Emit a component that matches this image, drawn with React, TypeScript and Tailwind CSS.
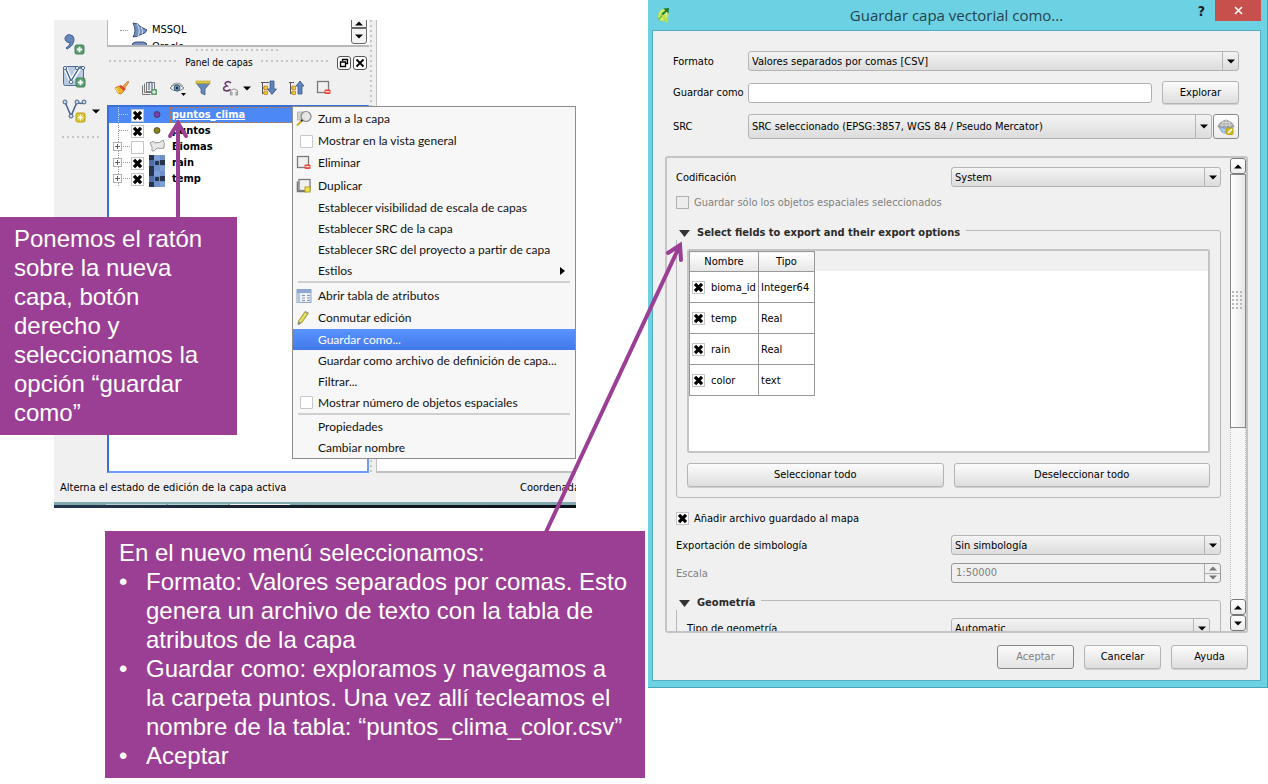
import React from 'react';
import type { ReactNode } from 'react';

const btn =
  'rounded-[3px] border border-[#b4b4b4] bg-linear-to-b from-[#fcfcfc] to-[#dedede] pt-px text-black shadow-[0_1px_0_#d0d0d0]';

function Caret({ up = false, className = 'fill-black' }: { up?: boolean; className?: string }) {
  return (
    <svg width="8" height="5" viewBox="0 0 8 5" className={className} aria-hidden="true">
      <path d={up ? 'M0 4.5 4 .5l4 4z' : 'M0 .5h8l-4 4z'} />
    </svg>
  );
}

function Combo({ id, value, height = 'h-5', className = '' }: { id: string; value: string; height?: string; className?: string }) {
  return (
    <div className={`relative min-w-0 ${height} ${className}`}>
      <select
        id={id}
        className="block h-full w-full appearance-none rounded-[3px] border border-[#b4b4b4] bg-linear-to-b from-[#f4f4f4] to-[#dcdcdc] pt-0.5 pr-4 pl-[3px] text-black"
      >
        <option>{value}</option>
      </select>
      <span className="pointer-events-none absolute inset-y-px right-px flex w-4 items-center justify-center border-l border-[#b4b4b4]">
        <Caret />
      </span>
    </div>
  );
}

function Tick({ id, checked = false, disabled = false, label }: { id: string; checked?: boolean; disabled?: boolean; label?: string }) {
  return (
    <span className="relative block size-[13px] shrink-0">
      <input
        id={id}
        type="checkbox"
        defaultChecked={checked}
        disabled={disabled}
        aria-label={label}
        className="peer block size-[13px] appearance-none border border-[#c4c4c4] bg-white disabled:border-[#b0b0b0] disabled:bg-[#ececec]"
      />
      <svg viewBox="0 0 13 13" className="pointer-events-none absolute inset-0 hidden peer-checked:block" aria-hidden="true">
        <path d="M3 2.800l7 7.400M10 2.800l-7 7.400" stroke="#000" strokeWidth="3.200" />
      </svg>
    </span>
  );
}

function Dots({ className = '' }: { className?: string }) {
  return (
    <span
      className={`block h-[5px] bg-[radial-gradient(circle_at_1px_1px,#c6c6c6_1px,transparent_1px)] bg-size-[5px_5px] ${className}`}
    />
  );
}

/* ---------- toolbar drawings ---------- */

function PlusBadge({ x, y }: { x: number; y: number }) {
  return (
    <g>
      <rect x={x} y={y} width="9" height="9" rx="1.5" fill="#5a9e6f" stroke="#3f8257" />
      <path d={`M${x + 4.5} ${y + 1.8}v5.4M${x + 1.8} ${y + 4.5}h5.4`} stroke="#fff" strokeWidth="1.8" />
    </g>
  );
}

const CommaIcon = () => (
  <svg width="26" height="24" viewBox="0 0 26 24">
    <path d="M3 6a4.600 4.600 0 0 1 9 1c0 5-3 8-7 10l-1-1c3-2 4-4 4-5.500-3 .5-5-1.500-5-4.500z" fill="#6687b8" stroke="#3e5f92" />
    <PlusBadge x={13} y={13} />
  </svg>
);

const VectorIcon = () => (
  <svg width="26" height="26" viewBox="0 0 26 26">
    <rect x="1.500" y="2.500" width="20" height="19" rx="2" fill="#b9cbe2" stroke="#4e6c94" />
    <path d="M3 3l6 14L18 3" fill="none" stroke="#fff" strokeWidth="4" />
    <path d="M3 3l6 14L17 4h4" fill="none" stroke="#46638c" strokeWidth="1.400" />
    <g fill="#fff" stroke="#46638c">
      <circle cx="3" cy="4" r="1.600" />
      <circle cx="9" cy="18" r="1.800" />
      <circle cx="15" cy="4" r="1.600" />
      <circle cx="21" cy="4" r="1.600" />
    </g>
    <PlusBadge x={14} y={14} />
  </svg>
);

const NewShapeIcon = () => (
  <svg width="26" height="26" viewBox="0 0 26 26">
    <path d="M3 4l6 14 6-14q4 3 8 0" fill="none" stroke="#46638c" strokeWidth="1.500" />
    <g fill="#c9d6e8" stroke="#46638c">
      <circle cx="3" cy="4" r="2" />
      <circle cx="9" cy="18" r="2" />
      <circle cx="15" cy="4" r="2" />
      <circle cx="22" cy="4" r="2" />
    </g>
    <rect x="14" y="15" width="9" height="9" rx="1.500" fill="#dcc62e" stroke="#b59f10" />
    <path d="M18.500 16.500v6M15.500 19.500h6M16.500 17.500l4 4M20.500 17.500l-4 4" stroke="#fff" strokeWidth=".9" />
  </svg>
);

const BrushIcon = () => (
  <svg width="16" height="16" viewBox="0 0 16 16">
    <path d="M1 8l4-2 5 5-3 3-3-1z" fill="#e9b52e" stroke="#d97a28" />
    <path d="M1 8l3 5 1 0-2-5z" fill="#f7df62" />
    <path d="M5 6l2-1 5 4-2 2z" fill="#d8492f" />
    <path d="M9 6l5-5 1 1-4 6z" fill="#e9a046" stroke="#b9762a" strokeWidth=".6" />
  </svg>
);

const GroupIcon = () => (
  <svg width="17" height="17" viewBox="0 0 17 17">
    <path d="M1.500 5.500v9h8M3.500 3.500v9h8" fill="none" stroke="#777" />
    <rect x="5.500" y="2.500" width="8" height="9" fill="#f2f2f2" stroke="#777" />
    <path d="M8 10V3.500a1.500 1.500 0 0 1 3 0V9" fill="none" stroke="#4f6e98" strokeWidth="1.200" />
    <rect x="10" y="9" width="6" height="6" rx="1" fill="#5a9e6f" />
    <path d="M13 10v4M11 12h4" stroke="#fff" />
  </svg>
);

const EyeIcon = () => (
  <svg width="19" height="17" viewBox="0 0 19 17">
    <path d="M1 8q6-7 14 0-7 6-14 0z" fill="#fff" stroke="#777" />
    <path d="M2 6q6-6 12 0" fill="none" stroke="#999" />
    <circle cx="8" cy="8" r="3" fill="#7893bd" stroke="#415f8d" />
    <circle cx="8" cy="8" r="1.200" fill="#16263f" />
    <path d="M12 13h5l-2.500 3z" />
  </svg>
);

const FunnelIcon = () => (
  <svg width="16" height="16" viewBox="0 0 16 16">
    <path d="M1 3h14L10 9v6l-4-2V9z" fill="#6687b8" stroke="#46638c" strokeWidth=".8" />
    <rect x="1" y="1" width="14" height="2.500" fill="#e0c840" stroke="#b59f2a" strokeWidth=".6" />
  </svg>
);

const EpsilonIcon = () => (
  <svg width="17" height="17" viewBox="0 0 17 17">
    <path d="M9 3Q7 1 4.500 2 1.500 3.500 5 6 .5 7 2 10q3 2 6.500-.5" fill="none" stroke="#6e3d70" strokeWidth="1.600" />
    <path d="M8.500 15v-4q3.500-4 7 0v4M8.500 12.500h1.500V15H8.500M15.500 12.500H14V15h1.500" fill="none" stroke="#999" strokeWidth="1.100" />
  </svg>
);

function ExpandIcon({ up = false }: { up?: boolean }) {
  return (
    <svg width="17" height="16" viewBox="0 0 17 16">
      <path d={up ? 'M1 2.500h5M2.500 2v12M3 8h3M3 13h3' : 'M1 2.500h8M2.500 2v12M3 8h3M3 13h3'} fill="none" stroke="#555" />
      <path d="M4 6h3.500v3.500H4zM4 11h3.500v3.500H4z" fill="#e8c93a" stroke="#c17a2a" strokeWidth=".7" />
      {up ? (
        <path d="M12 1l4 5h-2v8h-4V6H8z" fill="#5f83bb" stroke="#36568a" strokeWidth=".8" />
      ) : (
        <path d="M10 1h4v8h2.500L12 14.500 7.500 9H10z" fill="#5f83bb" stroke="#36568a" strokeWidth=".8" />
      )}
    </svg>
  );
}

const RemoveIcon = () => (
  <svg width="16" height="16" viewBox="0 0 16 16">
    <rect x="1.500" y="1.500" width="11" height="11" fill="#f0f0ee" stroke="#7a7a7a" strokeWidth="1.300" />
    <rect x="8.500" y="9.500" width="6" height="4.500" rx="1" fill="#e8463c" />
    <path d="M9.500 11.700h4" stroke="#fff" />
  </svg>
);

const DuplicateIcon = () => (
  <svg width="16" height="16" viewBox="0 0 16 16">
    <path d="M1.500 3.500v10h9" fill="none" stroke="#777" strokeWidth="1.600" />
    <rect x="3" y="1.500" width="11" height="11" fill="#f0f0ee" stroke="#7a7a7a" strokeWidth="1.300" />
    <rect x="9" y="9" width="5" height="5" fill="#f3e35a" stroke="#b59f10" />
  </svg>
);

const ZoomIcon = () => (
  <svg width="17" height="17" viewBox="0 0 17 17">
    <path d="M1.500 2h7v8h-7z" fill="#d4d4d2" stroke="#b5b5b3" />
    <circle cx="10" cy="6.500" r="5" fill="#e4e4e2" fillOpacity=".9" stroke="#8a8a8a" strokeWidth="1.200" />
    <path d="M6.500 10L5 11.500" stroke="#333" strokeWidth="1.800" />
    <path d="M5 11.500L1 15.500" stroke="#cdb21f" strokeWidth="2" />
  </svg>
);

const TableIcon = () => (
  <svg width="16" height="16" viewBox="0 0 16 16">
    <rect x="1" y="1.500" width="14" height="13" fill="#e8edf5" stroke="#8da3c4" />
    <rect x="1" y="1.500" width="14" height="3.500" fill="#8faad2" />
    <rect x="1" y="5" width="3.500" height="9.500" fill="#b5c7e2" />
    <path d="M6 7.500h3M6 10h3M6 12.500h3M11 7.500h3M11 10h3M11 12.500h3" stroke="#8595ae" />
    <path d="M5 5v9M10 5v9" stroke="#fff" />
  </svg>
);

const PencilIcon = () => (
  <svg width="16" height="16" viewBox="0 0 16 16">
    <path d="M9 1.500l3.500 1.700L5.500 13 2 14.800 2.500 11z" fill="#d8cc3a" stroke="#8a8435" strokeWidth=".7" />
    <path d="M10.500 2.500L4 12" stroke="#f7f2a0" />
    <path d="M2.500 11.500l2.700 1.500L2 15z" fill="#888" />
    <path d="M9.300 1.200l3.400 1.600-.8 1-3.400-1.600z" fill="#999" />
  </svg>
);

const DbIcon = () => (
  <svg width="18" height="17" viewBox="0 0 18 17">
    <path d="M2 1q5 0 8 4l6 3q-2 4-5 4-5 3-9 3 4-6 0-14z" fill="#7590bd" stroke="#36507c" />
    <path d="M6 2q4 6 1 12M10 5q3 4 1 7" fill="none" stroke="#d6e0ef" />
  </svg>
);

const GlobeIcon = () => (
  <svg width="18" height="18" viewBox="0 0 18 18">
    <path d="M2 9a7 7 0 0 0 10 6l4-6z" fill="#8eaedb" />
    <path d="M5 10q2 1 2 5M3 12h8" fill="none" stroke="#c5d6ef" strokeWidth=".8" />
    <path d="M1 9q1-5 8-7 7 2 8 7z" fill="#a9a9a9" stroke="#888" strokeWidth=".7" />
    <path d="M3 7h12M5 4.500h8M9 2v7M6 3.500L5 9M12 3.500L13 9" stroke="#e6e6e6" strokeWidth=".7" />
    <rect x="9.500" y="10" width="6.500" height="6.500" rx="1" fill="#d6bd22" stroke="#b59f10" />
    <path d="M11 15l4-4" stroke="#fff" strokeWidth="1.600" />
  </svg>
);

const LogoIcon = () => (
  <svg width="15" height="18" viewBox="0 0 15 18">
    <path d="M2.500 10.500Q2.500 4 8 3q4 .5 4 5 0 6-5 7-4.500-.5-4.500-4.500z" fill="#d8f07a" stroke="#b4dc4a" />
    <path d="M5 11.500q0-4.500 4-6" fill="none" stroke="#8cc63c" strokeWidth="1.800" />
    <path d="M8 9q0 5 4 6.500" fill="none" stroke="#b8e04e" strokeWidth="3" />
    <path d="M2.500 13.500L6 10" fill="none" stroke="#7ab83a" strokeWidth="1.500" />
    <path d="M6.500 8.500L11 4" stroke="#23803a" strokeWidth="2" />
    <path d="M7.500 2.500L13 2l-.5 5.500z" fill="#1f7a36" />
  </svg>
);

/* ---------- layer tree ---------- */

function Branch({ box, first }: { box?: boolean; first?: boolean }) {
  return (
    <svg width="22" height="16" viewBox="0 0 22 16" className="shrink-0" aria-hidden="true">
      <path d={`M9.500 0v16M${box ? 14 : 10} 7.500h9`} fill="none" stroke={first ? '#c9d6f2' : '#999'} strokeDasharray="1 1" />
      {box && (
        <>
          <rect x="4.500" y="3.500" width="8" height="8" fill="#fff" stroke="#b0b0b0" />
          <path d="M6 7.500h5M8.500 5v5" stroke="#666" />
        </>
      )}
    </svg>
  );
}

const RasterGlyph = () => (
  <svg width="16" height="16" viewBox="0 0 16 16">
    <rect width="16" height="16" fill="#6f90cb" />
    <path d="M0 0h5v5H0zM6 6h4v4H6zM11 5h5v5h-5zM0 11h5v5H0z" fill="#27344f" />
    <path d="M5 0h6v5H5zM11 11h5v5h-5z" fill="#7f9fd6" />
    <path d="M0 5h5v6H0z" fill="#4f6ea8" />
  </svg>
);

const Dot = ({ color }: { color: string }) => (
  <svg width="16" height="16" viewBox="0 0 16 16">
    <circle cx="8" cy="7.500" r="3" fill={color} stroke="#333" strokeWidth=".7" />
  </svg>
);

const PolyGlyph = () => (
  <svg width="16" height="16" viewBox="0 0 16 16">
    <path d="M1 4q3-3 6 0 4 0 7-3 2 3 1 8-4 1-7 0-3 4-5 3 1-4-2-8z" fill="#e8e8e6" stroke="#999" />
  </svg>
);

type Layer = { name: string; checked: boolean; glyph: ReactNode; box?: boolean; selected?: boolean };
const layers: Layer[] = [
  { name: 'puntos_clima', checked: true, glyph: <Dot color="#7a3fb4" />, selected: true },
  { name: 'puntos', checked: true, glyph: <Dot color="#8a8410" /> },
  { name: 'Biomas', checked: false, glyph: <PolyGlyph />, box: true },
  { name: 'rain', checked: true, glyph: <RasterGlyph />, box: true },
  { name: 'temp', checked: true, glyph: <RasterGlyph />, box: true },
];

function MainWindow() {
  return (
    <div className="flex w-[522px] flex-col overflow-hidden bg-[#f0f0f0] text-[11px] [font-family:'DejaVu_Sans_Condensed','DejaVu_Sans',sans-serif]">
      <div className="flex h-[453px]">
        <div className="flex w-[53px] shrink-0 flex-col items-start gap-2 pt-3 pl-2">
          <button aria-label="Texto delimitado"><CommaIcon /></button>
          <button aria-label="Capa virtual"><VectorIcon /></button>
          <div className="flex items-center gap-1">
            <button aria-label="Nueva capa"><NewShapeIcon /></button>
            <button aria-label="Más capas"><Caret /></button>
          </div>
          <Dots className="mt-1 w-[40px]" />
        </div>

        <div className="flex w-[262px] shrink-0 flex-col">
          <div className="flex h-[27px] shrink-0 overflow-hidden border-b-2 border-l border-[#b8b8b8] bg-white">
            <ul className="flex-1 pl-3">
              <li className="flex h-5 items-center gap-[3px]">
                <span className="w-2 border-t border-dotted border-[#999]" />
                <DbIcon /> MSSQL
              </li>
              <li className="flex h-3.5 items-center gap-[3px]">
                <span className="w-2 border-t border-dotted border-[#999]" />
                <svg width="18" height="12" viewBox="0 0 18 12" aria-hidden="true">
                  <rect x="1" y="1" width="15" height="10" rx="4" fill="#7590bd" stroke="#36507c" />
                </svg>
                Oracle
              </li>
            </ul>
            <div className="mr-0.5 w-4">
              <button aria-label="Subir" className="flex h-2 w-full items-center justify-center border border-t-0 border-[#666] bg-[#f4f4f4]"><Caret up /></button>
              <button aria-label="Bajar" className="flex h-4 w-full items-center justify-center rounded-b-[3px] border border-[#666] bg-[#f4f4f4]"><Caret /></button>
            </div>
          </div>
          <Dots className="mx-auto mt-0.5 w-[85px]" />
          <div className="flex h-[17px] items-center gap-2 pr-0.5 pl-0.5">
            <Dots className="flex-1" />
            <h2 className="text-[10px]">Panel de capas</h2>
            <Dots className="flex-1" />
            <div className="flex gap-0.5">
              <button aria-label="Desacoplar" className="flex size-3.5 items-center justify-center rounded-[3px] border border-[#555] bg-white">
                <svg width="10" height="10" viewBox="0 0 10 10"><path d="M3.500 3V1.500h5v4H7M1.500 4h5v4.500h-5z" fill="none" stroke="#000" strokeWidth="1.300" /></svg>
              </button>
              <button aria-label="Cerrar panel" className="flex size-3.5 items-center justify-center rounded-[3px] border border-[#555] bg-white">
                <svg width="10" height="10" viewBox="0 0 10 10"><path d="M1.500 1.500l7 7M8.500 1.500l-7 7" stroke="#000" strokeWidth="1.800" /></svg>
              </button>
            </div>
          </div>
          <div className="flex h-[34px] items-center gap-[11px] pl-[7px]">
            <button aria-label="Estilo"><BrushIcon /></button>
            <button aria-label="Añadir grupo"><GroupIcon /></button>
            <button aria-label="Visibilidad"><EyeIcon /></button>
            <button aria-label="Filtrar leyenda" className="-ml-1"><FunnelIcon /></button>
            <div className="flex items-center gap-1">
              <button aria-label="Filtrar por expresión"><EpsilonIcon /></button>
              <button aria-label="Opciones de filtro"><Caret /></button>
            </div>
            <button aria-label="Expandir todo" className="-ml-0.5"><ExpandIcon /></button>
            <button aria-label="Contraer todo"><ExpandIcon up /></button>
            <button aria-label="Eliminar capa"><RemoveIcon /></button>
          </div>
          <ul className="flex-1 border-2 border-[#6f9cf5] border-l-[#3b6fd8] border-t-[#3b6fd8] bg-white font-bold">
            {layers.map((l) => (
              <li key={l.name} className={l.selected ? 'flex h-4 items-center bg-[#4d88f7] text-white' : 'flex h-4 items-center text-black'}>
                <Branch box={l.box} first={l.selected} />
                <Tick id={`layer-${l.name}`} checked={l.checked} label={l.name} />
                <span className="mx-[5px]">{l.glyph}</span>
                {l.selected ? (
                  <span className="flex h-4 flex-1 items-center border border-dashed border-[#c4763a] pt-px pl-px underline">{l.name}</span>
                ) : (
                  <span className="pt-px pl-0.5">{l.name}</span>
                )}
              </li>
            ))}
          </ul>
        </div>

        <div className="w-[7px] shrink-0 bg-[radial-gradient(circle_at_2px_1px,#c8c8c8_1px,transparent_1px)] bg-size-[7px_5px]" />
        <div className="flex-1 border-b-2 border-l border-[#c0c0c0] bg-white" />
      </div>
      <footer className="flex h-[29px] items-center justify-between pt-0.5 pl-1.5">
        <p>Alterna el estado de edición de la capa activa</p>
        <p className="w-14 overflow-hidden whitespace-nowrap">Coordenada</p>
      </footer>
      <div className="flex h-[3px] gap-0.5 bg-[#7fa9ad] pt-0.5 pl-[52px]">
        <span className="w-[60px] bg-[#b9d0d2]" />
        <span className="w-[60px] bg-[#b9d0d2]" />
        <span className="w-[60px] bg-[#f4f4f4]" />
      </div>
      <div className="h-[3px] bg-linear-to-r from-[#26364f] via-[#121a26] to-[#0c121c]" />
    </div>
  );
}

/* ---------- context menu ---------- */

type Item = { text: string; icon?: ReactNode; check?: boolean; more?: boolean; active?: boolean; h: string };
const H23 = 'h-[23px]';
const H22 = 'h-[22px]';
const H21 = 'h-[21px]';
const menu: Item[][] = [
  [
    { text: 'Zum a la capa', icon: <ZoomIcon />, h: H23 },
    { text: 'Mostrar en la vista general', check: true, h: H22 },
    { text: 'Eliminar', icon: <RemoveIcon />, h: H22 },
    { text: 'Duplicar', icon: <DuplicateIcon />, h: H23 },
    { text: 'Establecer visibilidad de escala de capas', h: H21 },
    { text: 'Establecer SRC de la capa', h: H21 },
    { text: 'Establecer SRC del proyecto a partir de capa', h: H21 },
    { text: 'Estilos', more: true, h: H21 },
  ],
  [
    { text: 'Abrir tabla de atributos', icon: <TableIcon />, h: H23 },
    { text: 'Conmutar edición', icon: <PencilIcon />, h: H22 },
    { text: 'Guardar como...', active: true, h: H21 },
    { text: 'Guardar como archivo de definición de capa...', h: H21 },
    { text: 'Filtrar...', h: H21 },
    { text: 'Mostrar número de objetos espaciales', check: true, h: H21 },
  ],
  [
    { text: 'Propiedades', h: H21 },
    { text: 'Cambiar nombre', h: H21 },
  ],
];

function ContextMenu() {
  return (
    <div role="menu" className="absolute top-[106px] left-[292px] w-[284px] border border-[#8c8c8c] bg-[#f7f7f7] text-[12px] text-[#111] [font-family:Lato,'Open_Sans',sans-serif]">
      {menu.map((group, g) => (
        <div key={g}>
          {g > 0 && <hr className="mx-[5px] mb-px border-t-2 border-[#cfcfcf]" />}
          {group.map((it) => (
            <button
              key={it.text}
              role="menuitem"
              className={`flex w-full items-center text-left whitespace-nowrap ${it.h} ${it.active ? 'bg-linear-to-b from-[#5a94ff] to-[#4279ea] text-white' : ''}`}
            >
              <span className="flex w-[25px] shrink-0 items-center pl-[3px]">
                {it.icon}
                {it.check && <span className="ml-1 block size-[13px] rounded-[1px] border border-[#c8c8c8] bg-white" />}
              </span>
              <span className="flex-1">{it.text}</span>
              {it.more && (
                <svg width="5" height="8" viewBox="0 0 5 8" className="mr-2.5" aria-hidden="true"><path d="M0 0l5 4-5 4z" /></svg>
              )}
            </button>
          ))}
        </div>
      ))}
    </div>
  );
}

/* ---------- save dialog ---------- */

const fields = [
  ['bioma_id', 'Integer64'],
  ['temp', 'Real'],
  ['rain', 'Real'],
  ['color', 'text'],
];

function Group({ title, children }: { title: string; children: ReactNode }) {
  return (
    <section className="rounded-[3px] border border-[#b8b8b8] pb-2.5">
      <h3 className="-mt-[7px] -ml-px flex h-4 w-fit items-center gap-[7px] bg-[#f0f0f0] pt-0.5 pr-1.5 pl-[3px] text-[11px] font-bold text-[#2a2a2a] [font-family:'DejaVu_Sans_Condensed','DejaVu_Sans',sans-serif]">
        <svg width="11" height="7" viewBox="0 0 11 7" aria-hidden="true"><path d="M0 0h11L5.500 7z" fill="#333" /></svg>
        {title}
      </h3>
      <div className="px-2.5">{children}</div>
    </section>
  );
}

function ScrollBar() {
  const b = 'flex h-4 w-full shrink-0 items-center justify-center rounded-[3px] border border-[#777] bg-linear-to-b from-white to-[#ececec]';
  return (
    <div className="flex w-4 shrink-0 flex-col bg-[#f6f6f6]">
      <button aria-label="Subir" className={b}><Caret up /></button>
      <div className="flex h-[254px] items-center justify-center border border-[#888] bg-linear-to-r from-white via-[#f4f4f4] to-[#e6e6e6]">
        <span className="h-5 w-3 bg-[radial-gradient(circle_at_1px_1px,#b8b8b8_1px,transparent_1px)] bg-size-[4px_4px]" />
      </div>
      <div className="flex-1 border-x border-dotted border-[#bbb]" />
      <button aria-label="Subir una línea" className={b}><Caret up /></button>
      <button aria-label="Bajar una línea" className={b}><Caret /></button>
    </div>
  );
}

function SaveDialog() {
  return (
    <div role="dialog" aria-labelledby="dlg-title" className="flex min-w-0 flex-1 flex-col border-r border-b border-[#4aa5b8] bg-[#6dd1e4] pr-1.5 pb-1.5 pl-1 text-[11px] text-black [font-family:'DejaVu_Sans_Condensed','DejaVu_Sans',sans-serif] [&_label]:pt-0.5">
      <header className="grid h-[30px] grid-cols-[1fr_auto_1fr] items-start text-[#24434b]">
        <span className="pt-1.5 pl-1"><LogoIcon /></span>
        <h1 id="dlg-title" className="text-[15px] leading-[30px] [font-family:'Open_Sans','Noto_Sans',sans-serif]">Guardar capa vectorial como...</h1>
        <div className="flex items-start justify-end gap-2.5">
          <button aria-label="Ayuda" className="text-[14px] leading-[22px] font-bold text-[#1c1c1c]">?</button>
          <button aria-label="Cerrar" className="flex h-[21px] w-[46px] items-center justify-center bg-[#c7504c]">
            <svg width="9" height="9" viewBox="0 0 9 9"><path d="M1 1l7 7M8 1L1 8" stroke="#fff" strokeWidth="1.600" /></svg>
          </button>
        </div>
      </header>

      <div className="border border-[#55aebf] bg-[#f0f0f0] pb-[11px]">
        <form className="grid grid-cols-[75px_1fr] items-center gap-y-2.5 pt-5 pr-[21px] pl-5">
          <label htmlFor="format">Formato</label>
          <Combo id="format" value="Valores separados por comas [CSV]" />
          <label htmlFor="path" className="whitespace-nowrap">Guardar como</label>
          <div className="flex h-[23px] items-center gap-2.5">
            <input id="path" type="text" className="h-5 min-w-0 flex-1 rounded-[3px] border border-[#b0b0b0] bg-white px-1" />
            <button type="button" className={`h-[23px] w-[77px] ${btn}`}>Explorar</button>
          </div>
          <label htmlFor="crs">SRC</label>
          <div className="flex h-[25px] items-center gap-px">
            <Combo id="crs" value="SRC seleccionado (EPSG:3857, WGS 84 / Pseudo Mercator)" height="h-[25px]" className="flex-1" />
            <button type="button" aria-label="Seleccionar SRC" className="flex h-[25px] w-[26px] items-center justify-center rounded-[3px] border border-[#888] bg-linear-to-b from-white to-[#ececec]"><GlobeIcon /></button>
          </div>
        </form>

        <div className="mt-[17px] mr-3 ml-3 flex h-[477px] overflow-hidden rounded-[3px] border-2 border-[#c4c4c4]">
          <div className="min-w-0 flex-1 px-[9px] pt-[9px]">
            <div className="grid grid-cols-[275px_1fr] items-center">
              <label htmlFor="encoding">Codificación</label>
              <Combo id="encoding" value="System" />
            </div>
            <div className="mt-[9px] mb-[21px] flex h-[13px] items-center gap-[5px] text-[#808080]">
              <Tick id="only-selected" disabled />
              <label htmlFor="only-selected">Guardar sólo los objetos espaciales seleccionados</label>
            </div>

            <Group title="Select fields to export and their export options">
              <div className="mt-[9px] h-[204px] rounded-[2px] border-2 border-[#c4c4c4] bg-[linear-gradient(#f0f0f0_20px,#fff_20px)]">
                <table className="table-fixed border-collapse">
                  <thead>
                    <tr className="h-5">
                      <th className="w-[69px] border border-[#999] bg-linear-to-b from-white to-[#e6e6e6] p-0 pt-0.5 font-normal">Nombre</th>
                      <th className="w-[56px] border border-[#999] bg-linear-to-b from-white to-[#e6e6e6] p-0 pt-0.5 font-normal">Tipo</th>
                    </tr>
                  </thead>
                  <tbody>
                    {fields.map(([name, type]) => (
                      <tr key={name} className="h-[31px] bg-white">
                        <td className="border border-[#999] p-0">
                          <span className="flex items-center gap-1.5 pl-0.5">
                            <Tick id={`field-${name}`} checked />
                            <label htmlFor={`field-${name}`}>{name}</label>
                          </span>
                        </td>
                        <td className="border border-[#999] p-0 pt-0.5 pl-0.5">{type}</td>
                      </tr>
                    ))}
                  </tbody>
                </table>
              </div>
              <div className="mt-2.5 grid grid-cols-2 gap-2.5">
                <button type="button" className={`h-6 ${btn}`}>Seleccionar todo</button>
                <button type="button" className={`h-6 ${btn}`}>Deseleccionar todo</button>
              </div>
            </Group>

            <div className="mt-[13px] flex h-[14px] items-center gap-[5px]">
              <Tick id="add-to-map" checked />
              <label htmlFor="add-to-map">Añadir archivo guardado al mapa</label>
            </div>
            <div className="mt-2.5 mb-[17px] grid grid-cols-[275px_1fr] items-center gap-y-2">
              <label htmlFor="symbology">Exportación de simbología</label>
              <Combo id="symbology" value="Sin simbología" />
              <label htmlFor="scale" className="text-[#808080]">Escala</label>
              <div className="flex h-5 rounded-[3px] border border-[#999]">
                <input id="scale" type="text" disabled defaultValue="1:50000" className="min-w-0 flex-1 px-1 pt-px text-[#808080]" />
                <div className="flex w-4 flex-col border-l border-[#aaa]">
                  <button type="button" disabled aria-label="Aumentar" className="flex flex-1 items-center justify-center border-b border-[#aaa]"><Caret up className="fill-[#777]" /></button>
                  <button type="button" disabled aria-label="Disminuir" className="flex flex-1 items-center justify-center"><Caret className="fill-[#777]" /></button>
                </div>
              </div>
            </div>
            <Group title="Geometría">
              <div className="mt-2 grid grid-cols-[264px_1fr] items-center">
                <label htmlFor="geometry">Tipo de geometría</label>
                <Combo id="geometry" value="Automatic" />
              </div>
            </Group>
          </div>
          <ScrollBar />
        </div>

        <div className="mt-3 flex justify-end gap-2.5 pr-3">
          <button type="button" disabled className="h-6 w-[77px] rounded-[3px] border border-[#888] bg-linear-to-b from-[#fafafa] to-[#e4e4e4] pt-px text-[#808080]">Aceptar</button>
          <button type="button" className={`h-6 w-[77px] ${btn}`}>Cancelar</button>
          <button type="button" className={`h-6 w-[77px] ${btn}`}>Ayuda</button>
        </div>
      </div>
    </div>
  );
}

const steps = [
  'Formato: Valores separados por comas. Esto genera un archivo de texto con la tabla de atributos de la capa',
  'Guardar como: exploramos y navegamos a la carpeta puntos. Una vez allí tecleamos el nombre de la tabla: “puntos_clima_color.csv”',
  'Aceptar',
];

export default function App() {
  return (
    <main className="relative flex min-h-screen items-start bg-white">
      <section className="relative w-[648px] shrink-0 pt-5">
        <div className="ml-[54px]"><MainWindow /></div>
        <ContextMenu />
        <p className="absolute top-[217px] left-0 w-[237px] bg-[#9a3f94] px-3.5 pt-[7px] pb-2 text-[24px] leading-[29px] text-white [font-family:'Liberation_Sans',Arial,sans-serif]">
          Ponemos el ratón sobre la nueva capa, botón derecho y seleccionamos la opción “guardar como”
        </p>
        <div className="mt-[23px] ml-[105px] w-[540px] bg-[#9a3f94] px-3.5 pt-[7px] pb-2 text-[24px] leading-[29px] text-white [font-family:'Liberation_Sans',Arial,sans-serif]">
          <p>En el nuevo menú seleccionamos:</p>
          <ul>
            {steps.map((s) => (
              <li key={s} className="flex">
                <span className="w-[27px] shrink-0" aria-hidden="true">•</span>
                <span>{s}</span>
              </li>
            ))}
          </ul>
        </div>
      </section>
      <SaveDialog />
      <svg width="700" height="540" viewBox="0 0 700 540" className="pointer-events-none absolute top-0 left-0" fill="none" stroke="#9a3f94" strokeWidth="4" aria-hidden="true">
        <path d="M178 218V124M170 136l8-13 8 13" strokeLinecap="round" />
        <path d="M546 532L680 245M668 253l12-8 1 15" strokeLinecap="round" />
      </svg>
    </main>
  );
}
